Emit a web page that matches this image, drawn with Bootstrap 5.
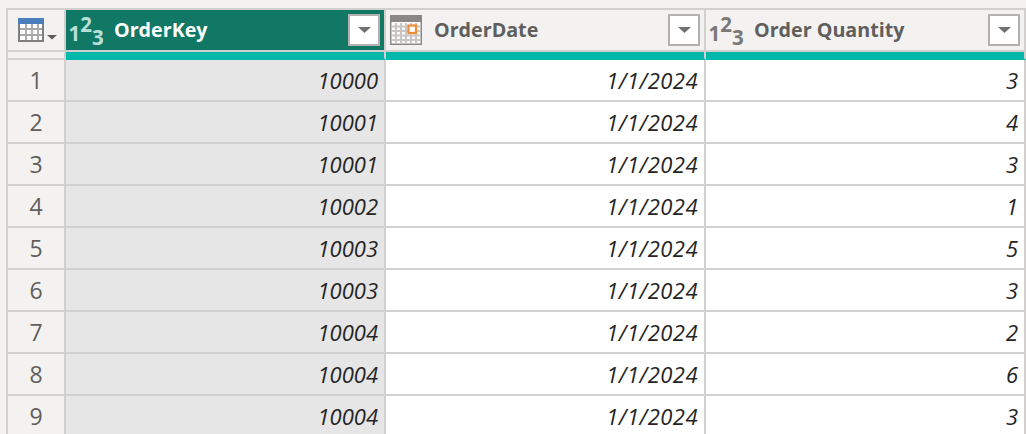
<!DOCTYPE html>
<html lang="en">
<head>
<meta charset="utf-8">
<title>Orders</title>
<link href="https://cdn.jsdelivr.net/npm/bootstrap@5.3.0/dist/css/bootstrap.min.css" rel="stylesheet">
<style>
html,body{height:100%;margin:0;background:#f3f2f1;overflow:hidden}
.pq-wrap{height:434px;padding:8px 0 0 6px;overflow:hidden}
.pq-grid{border-collapse:separate;border-spacing:0;table-layout:fixed;width:1020px;margin:0;
  border-left:2px solid #d2d0ce;border-top:2px solid #d2d0ce;font-family:"Open Sans","Noto Sans",sans-serif}
.pq-grid th,.pq-grid td{box-sizing:border-box;padding:0;border-right:2px solid #d2d0ce;border-bottom:2px solid #d2d0ce}
.pq-grid col.c0{width:58px}
.pq-grid col.c1{width:320px}
.pq-head th{height:42px;background:#f3f2f1;vertical-align:middle;color:#605e5c;font-size:19.7px;font-weight:700}
.pq-head th.pq-sel{background:#117865;color:#fff}
.pq-head .pq-in{display:flex;align-items:center;height:40px;padding-right:4px}
.pq-head .pq-lab{white-space:nowrap}
.pq-strip th{height:8px;background:#f3f2f1}
.pq-strip th.pq-teal{background:#01b8aa;border-bottom-color:#01b8aa}
.pq-grid tbody td{height:42px;background:#fff;color:#252423;font-size:22px;font-style:italic;text-align:right;padding:0 6px 0 0;vertical-align:middle;line-height:1}
.pq-grid tbody td.pq-date{letter-spacing:.45px}
.pq-grid tbody td.pq-idx{background:#f3f2f1;color:#605e5c;font-style:normal;text-align:center;padding:0;font-size:23px}
.pq-grid tbody td.pq-col{background:#e6e6e6}
.pq-fbtn{width:32px;height:32px;padding:0;margin-left:auto;border:2px solid #b3b1af;border-radius:0;background:#fff;display:flex;align-items:center;justify-content:center}
.pq-fbtn:hover{background:#fff;border-color:#b3b1af}
.pq-fbtn svg,.pq-ic{display:block;flex:none}
.pq-ic-t{margin-left:10px}
.pq-ic-c{margin:0 12px 0 4px}
.pq-num{display:flex;align-items:flex-start;flex:none;align-self:flex-start;width:45.5px;height:40px;margin-left:2.5px;font-size:20.5px;line-height:22px;font-weight:700;color:#7a7876}
.pq-sel .pq-num{color:#b9e0d8}
.pq-num span:nth-child(1){margin-top:12px}
.pq-num span:nth-child(2){margin-top:3px}
.pq-num span:nth-child(3){margin-top:16px}
</style>
</head>
<body>
<div class="pq-wrap">
<table class="pq-grid">
<colgroup><col class="c0"><col class="c1"><col class="c1"><col class="c1"></colgroup>
<thead>
<tr class="pq-head">
<th>
<div class="pq-in">
<svg class="pq-ic pq-ic-t" width="40" height="24" viewBox="0 0 40 24">
<rect x="1" y="1" width="24" height="22" fill="#fff" stroke="#7f7f7f" stroke-width="2"/>
<rect x="0" y="0" width="26" height="6" fill="#4a7ebb"/>
<path d="M2 11h22M2 17h22M8 6v16M14 6v16M20 6v16" stroke="#a6a6a6" stroke-width="1.800" fill="none"/>
<path d="M29 17h10l-5 4.500z" fill="#605e5c"/>
</svg>
</div>
</th>
<th class="pq-sel">
<div class="pq-in">
<span class="pq-num"><span>1</span><span>2</span><span>3</span></span>
<span class="pq-lab">OrderKey</span>
<button class="btn pq-fbtn" type="button" aria-label="Filter OrderKey"><svg width="13" height="6" viewBox="0 0 13 6"><path d="M0 0h13L6.500 6z" fill="#737170"/></svg></button>
</div>
</th>
<th>
<div class="pq-in">
<svg class="pq-ic pq-ic-c" width="32" height="30" viewBox="0 0 32 30">
<rect x="0" y="0" width="32" height="30" fill="#8a8886"/>
<rect x="1.500" y="7" width="29" height="21.500" fill="#fff"/>
<path d="M2 11.500h28M2 16h28M2 20.500h28M2 25h28M6 8v20M11 8v20M16 8v20M21 8v20M26 8v20" stroke="#c8c6c4" stroke-width="2.200" fill="none"/>
<rect x="18.500" y="10.500" width="7.500" height="7.500" fill="#fff" stroke="#ed8b37" stroke-width="2.200"/>
</svg>
<span class="pq-lab">OrderDate</span>
<button class="btn pq-fbtn" type="button" aria-label="Filter OrderDate"><svg width="13" height="6" viewBox="0 0 13 6"><path d="M0 0h13L6.500 6z" fill="#737170"/></svg></button>
</div>
</th>
<th>
<div class="pq-in">
<span class="pq-num"><span>1</span><span>2</span><span>3</span></span>
<span class="pq-lab">Order Quantity</span>
<button class="btn pq-fbtn" type="button" aria-label="Filter Order Quantity"><svg width="13" height="6" viewBox="0 0 13 6"><path d="M0 0h13L6.500 6z" fill="#737170"/></svg></button>
</div>
</th>
</tr>
<tr class="pq-strip"><th></th><th class="pq-teal"></th><th class="pq-teal"></th><th class="pq-teal"></th></tr>
</thead>
<tbody>
<tr><td class="pq-idx">1</td><td class="pq-col">10000</td><td class="pq-date">1/1/2024</td><td>3</td></tr>
<tr><td class="pq-idx">2</td><td class="pq-col">10001</td><td class="pq-date">1/1/2024</td><td>4</td></tr>
<tr><td class="pq-idx">3</td><td class="pq-col">10001</td><td class="pq-date">1/1/2024</td><td>3</td></tr>
<tr><td class="pq-idx">4</td><td class="pq-col">10002</td><td class="pq-date">1/1/2024</td><td>1</td></tr>
<tr><td class="pq-idx">5</td><td class="pq-col">10003</td><td class="pq-date">1/1/2024</td><td>5</td></tr>
<tr><td class="pq-idx">6</td><td class="pq-col">10003</td><td class="pq-date">1/1/2024</td><td>3</td></tr>
<tr><td class="pq-idx">7</td><td class="pq-col">10004</td><td class="pq-date">1/1/2024</td><td>2</td></tr>
<tr><td class="pq-idx">8</td><td class="pq-col">10004</td><td class="pq-date">1/1/2024</td><td>6</td></tr>
<tr><td class="pq-idx">9</td><td class="pq-col">10004</td><td class="pq-date">1/1/2024</td><td>3</td></tr>
</tbody>
</table>
</div>
<script src="https://cdn.jsdelivr.net/npm/bootstrap@5.3.0/dist/js/bootstrap.bundle.min.js"></script>
</body>
</html>
